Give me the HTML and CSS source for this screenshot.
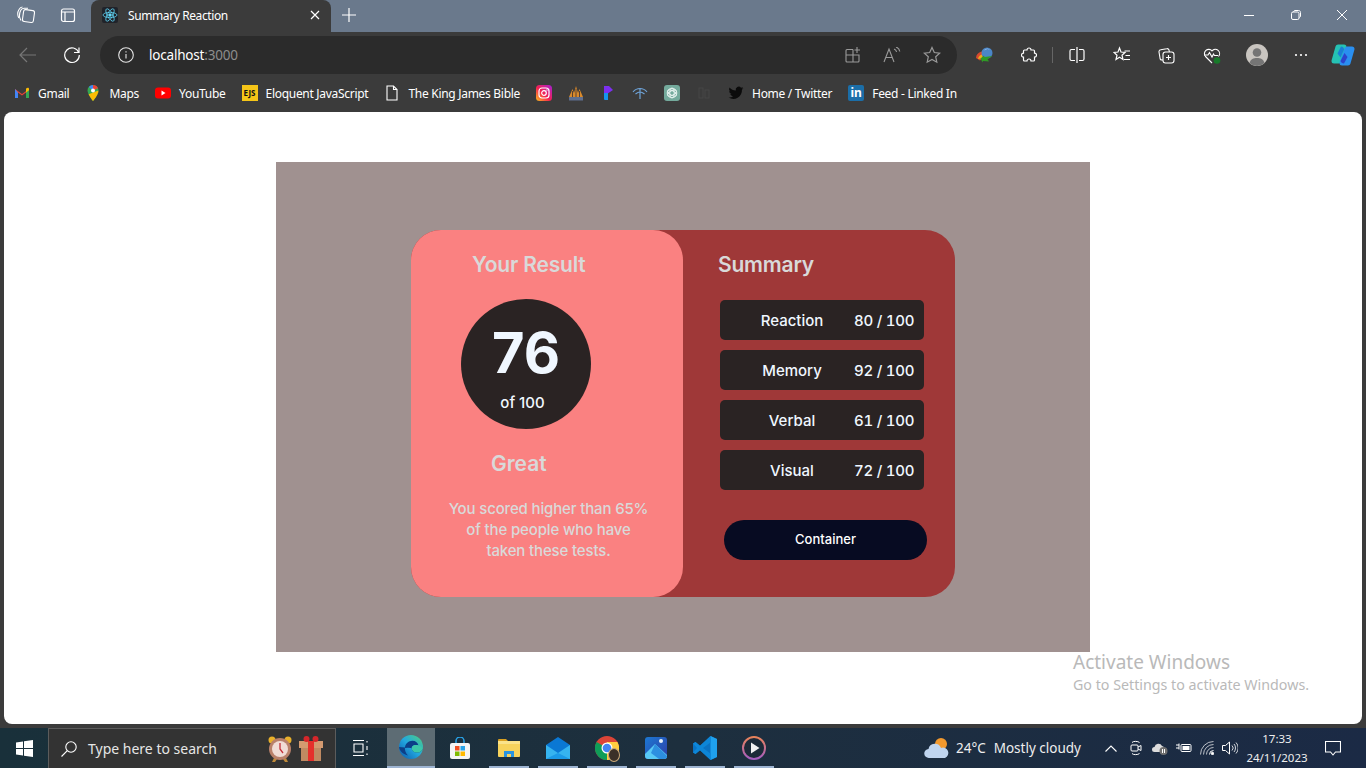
FILE: index.html
```html
<!DOCTYPE html>
<html lang="en">
<head>
    <meta charset="UTF-8">
    <title>Summary Reaction</title>
    <link rel="stylesheet" href="styles.css">
</head>
<body>

<div class="tabstrip">
    <span class="strip-btn"><svg width="20" height="20" viewBox="0 0 20 20" fill="none" stroke="#fff" stroke-width="1.100"><rect x="7" y="5" width="11" height="12" rx="2" transform="rotate(8 12 11)"/><path d="M5 15.500C3.400 13 3 9 4.600 5.500 5.200 4 6.500 3.200 8 3.200h4"/><path d="M2.800 13C1.500 10.500 1.500 7 3 4.500 3.800 3 5 2 6.500 2"/></svg></span>
    <span class="strip-btn"><svg width="16" height="16" viewBox="0 0 16 16" fill="none" stroke="#fff" stroke-width="1.200"><rect x="1.500" y="2" width="13" height="12.500" rx="2"/><path d="M1.500 5h13M5 5v9.500"/></svg></span>
    <div class="tab">
        <span class="tab-icon"><svg width="16" height="16" viewBox="-12 -12 24 24" fill="none" stroke="#61dafb" stroke-width="1.100"><circle r="2" fill="#61dafb"/><ellipse rx="10.500" ry="4"/><ellipse rx="10.500" ry="4" transform="rotate(60)"/><ellipse rx="10.500" ry="4" transform="rotate(120)"/></svg></span>
        <span class="tab-title">Summary Reaction</span>
        <svg class="tab-close" width="10" height="10" viewBox="0 0 10 10" stroke="#fff" stroke-width="1.200"><path d="M1 1l8 8M9 1L1 9"/></svg>
    </div>
    <svg class="tab-new" width="14" height="14" viewBox="0 0 14 14" stroke="#fff" stroke-width="1.200"><path d="M7 0v14M0 7h14"/></svg>
    <div class="win-controls">
        <svg width="10" height="10" viewBox="0 0 10 10" stroke="#fff"><path d="M0 5.500h10"/></svg>
        <svg width="10" height="10" viewBox="0 0 10 10" fill="none" stroke="#fff"><rect x=".5" y="2" width="7.500" height="7.500" rx="1.500"/><path d="M2.500 1.800C2.800 1 3.300.5 4 .5h3.500c1.200 0 2 .8 2 2V6c0 .7-.4 1.200-1.200 1.500"/></svg>
        <svg width="10" height="10" viewBox="0 0 10 10" stroke="#fff"><path d="M0 0l10 10M10 0L0 10"/></svg>
    </div>
</div>

<div class="toolbar">
    <span class="tool-btn"><svg width="18" height="18" viewBox="0 0 18 18" fill="none" stroke="#777" stroke-width="1.200"><path d="M17 9H1M8 2L1 9l7 7"/></svg></span>
    <span class="tool-btn"><svg width="18" height="18" viewBox="0 0 18 18" fill="none" stroke="#fff" stroke-width="1.200"><path d="M15.800 6.500A7.300 7.300 0 1 0 16.300 9"/><path d="M16 1.500v5h-5"/></svg></span>
    <div class="addressbar">
        <svg width="16" height="16" viewBox="0 0 16 16" fill="none" stroke="#e6e6e6" stroke-width="1.100"><circle cx="8" cy="8" r="7.300"/><path d="M8 7v4.500M8 4.300v1.300"/></svg>
        <span class="url">localhost<span class="url-port">:3000</span></span>
        <div class="addr-icons">
            <svg width="16" height="16" viewBox="0 0 16 16" fill="none" stroke="#9a9a9a" stroke-width="1.100"><path d="M8 2.500H2a1 1 0 0 0-1 1V14a1 1 0 0 0 1 1h11a1 1 0 0 0 1-1V8H1M8 2.500V15M12 0v6M9.500 3h5.500"/></svg>
            <svg width="18" height="16" viewBox="0 0 18 16" fill="none" stroke="#9a9a9a" stroke-width="1.100"><path d="M1 15L6 2l5 13M3 10.500h6M11 2c1.500.5 2.300 1.500 2.600 3M13 0c2 .7 3.400 2.200 3.800 4.500"/></svg>
            <svg width="18" height="18" viewBox="0 0 18 18" fill="none" stroke="#9a9a9a" stroke-width="1.200"><path d="M9 1.500l2.300 5 5.400.6-4 3.700 1.100 5.400L9 13.500l-4.800 2.700 1.100-5.400-4-3.700 5.400-.6z"/></svg>
        </div>
    </div>
    <span class="tool-btn first-ext"><svg width="18" height="16" viewBox="0 0 18 16"><path d="M0 11c.5-4 3-6 6-6.500l1 6-3 3z" fill="#d8492e"/><path d="M2 12c.5-2.500 2-4 4-4.500l1 3.500z" fill="#e8b01c"/><circle cx="11" cy="6" r="5.500" fill="#4a86c8"/><path d="M8 3.500a4 4 0 0 1 6-.7 5 5 0 0 0-6 .7z" fill="#dcebf8"/><path d="M4.500 11.500L8 8.500l.5 1.500 8-1-5 3 1.500 2.500-6-.5-.5 1.500z" fill="#2f9a26"/></svg></span>
    <span class="tool-btn"><svg width="16" height="16" viewBox="0 0 16 16" fill="none" stroke="#fff" stroke-width="1.200"><path d="M6 3a2 2 0 0 1 4 0h2.500a1 1 0 0 1 1 1v2.200a2 2 0 0 1 0 4V13a1 1 0 0 1-1 1H10a2 2 0 0 0-4 0H3.500a1 1 0 0 1-1-1v-2.800a2 2 0 0 1 0-4V4a1 1 0 0 1 1-1z"/></svg></span>
    <span class="tool-sep"></span>
    <span class="tool-btn"><svg width="16" height="16" viewBox="0 0 16 16" fill="none" stroke="#fff" stroke-width="1.200"><path d="M6 2.500H2.500a1.500 1.500 0 0 0-1.500 1.500v8a1.500 1.500 0 0 0 1.500 1.500H6M10 2.500h3.500A1.500 1.500 0 0 1 15 4v8a1.500 1.500 0 0 1-1.500 1.500H10M8 0v16"/></svg></span>
    <span class="tool-btn"><svg width="18" height="18" viewBox="0 0 18 18" fill="none" stroke="#fff" stroke-width="1.200"><path d="M6.500 2l1.500 4 4 .4-3 2.800 1 4.300-3.500-2.200L3 13.500l1-4.300-3-2.800 4-.4zM11.500 5H17M12.500 9.500H17M11 13.500h6"/></svg></span>
    <span class="tool-btn"><svg width="18" height="18" viewBox="0 0 18 18" fill="none" stroke="#fff" stroke-width="1.100"><rect x="5" y="6" width="11" height="11" rx="2.500"/><path d="M10.500 9v5M8 11.500h5M5 14H4a2 2 0 0 1-2-2l-1-6a2 2 0 0 1 1.700-2.300l6-1A2 2 0 0 1 11 4l.3 2"/></svg></span>
    <span class="tool-btn"><svg width="18" height="18" viewBox="0 0 18 18" fill="none" stroke="#fff" stroke-width="1.100"><path d="M9 17L2.500 10.500A4.300 4.300 0 0 1 9 4.800a4.300 4.300 0 0 1 6.500 5.700"/><path d="M1 9h4l1.500-2.500L9 11l1.500-3 1 1.500H15"/><circle cx="14" cy="14.500" r="3.300" fill="#187a2a" stroke="none"/></svg></span>
    <span class="tool-btn"><svg width="22" height="22" viewBox="0 0 22 22"><circle cx="11" cy="11" r="11" fill="#c9c5c0"/><circle cx="11" cy="8.500" r="4.300" fill="#757575"/><path d="M3.500 19c1-3.800 4-5 7.500-5s6.500 1.200 7.500 5A11 11 0 0 1 3.500 19z" fill="#757575"/></svg></span>
    <span class="tool-btn tool-more"><svg width="14" height="4" viewBox="0 0 14 4" fill="#fff"><circle cx="2" cy="2" r="1.100"/><circle cx="7" cy="2" r="1.100"/><circle cx="12" cy="2" r="1.100"/></svg></span>
    <span class="tool-btn tool-copilot"><svg width="26" height="22" viewBox="0 0 26 22" stroke-linejoin="round" stroke-width="5"><path d="M8 3h6L9 17H4z" fill="#25c2b4" stroke="#25c2b4"/><path d="M17 5h5l-4 14h-6z" fill="#2a8ff0" stroke="#2a8ff0"/><path d="M11 2.500c2 .2 3 1.500 3 3l-3.500 8-3-4z" fill="#1a7fd6" stroke="none"/><path d="M14 19.500c-2 0-3-1-3.500-2.500l4-8 3 4z" fill="#2c44cc" stroke="none"/></svg></span>
</div>

<div class="bookmarks">
    <span class="bm"><svg width="16" height="16" viewBox="0 0 16 16"><path d="M1 13V4l7 5 7-5v9h-3V7.500L8 10.500 4 7.500V13z" fill="#ea4335"/><path d="M1 4v9h3V7.500z" fill="#4285f4"/><path d="M15 4v9h-3V7.500z" fill="#34a853"/><path d="M12 3.500V7.500l3-2.200V4c0-1-1-1.500-1.800-1z" fill="#fbbc04"/></svg>Gmail</span>
    <span class="bm"><svg width="16" height="16" viewBox="0 0 16 16"><path d="M8 0a5.500 5.500 0 0 0-5.500 5.500C2.500 9.500 8 16 8 16s5.500-6.500 5.500-10.500A5.500 5.500 0 0 0 8 0z" fill="#34a853"/><path d="M8 0a5.500 5.500 0 0 0-4.200 2L8 5.500z" fill="#4285f4"/><path d="M8 0a5.500 5.500 0 0 1 5 3.200L8 5.500z" fill="#ea4335"/><path d="M13.400 5.500L3.600 9.200C5 12 8 16 8 16s5.500-6 5.400-10.500z" fill="#fbbc04"/><circle cx="8" cy="5.500" r="2" fill="#fff"/></svg>Maps</span>
    <span class="bm"><svg width="16" height="16" viewBox="0 0 16 16"><rect y="2.500" width="16" height="11" rx="3" fill="#f00"/><path d="M6.500 5.500v5l4-2.500z" fill="#fff"/></svg>YouTube</span>
    <span class="bm"><span class="ejs">EJS</span>Eloquent JavaScript</span>
    <span class="bm"><svg width="16" height="16" viewBox="0 0 16 16" fill="none" stroke="#fff" stroke-width="1.100"><path d="M3 1h6.500L13 4.500V15H3zM9.500 1v3.500H13"/></svg>The King James Bible</span>
    <span class="bm"><svg width="16" height="16" viewBox="0 0 16 16"><defs><linearGradient id="ig" x1="0" y1="1" x2="1" y2="0"><stop offset="0" stop-color="#fdc01c"/><stop offset=".45" stop-color="#f5214f"/><stop offset="1" stop-color="#a51fd6"/></linearGradient></defs><rect width="16" height="16" rx="3.500" fill="url(#ig)"/><rect x="3" y="3" width="10" height="10" rx="3" fill="none" stroke="#fff" stroke-width="1.200"/><circle cx="8" cy="8" r="2.300" fill="none" stroke="#fff" stroke-width="1.200"/><circle cx="11" cy="5" r=".7" fill="#fff"/></svg></span>
    <span class="bm"><svg width="16" height="16" viewBox="0 0 16 16"><path d="M1 12L4.500 4 6 8l2-7 2 7 1.500-4L15 12z" fill="#d98a2b"/><path d="M4.500 6v6M8 4v8M11.500 6v6" stroke="#5a4030"/><rect x="1" y="12" width="14" height="3.500" fill="#5f6f8f"/></svg></span>
    <span class="bm"><svg width="16" height="16" viewBox="0 0 16 16"><path d="M4 1h5l4 4-6 4H4z" fill="#7c2ff0"/><path d="M4 8h4v7H5a1 1 0 0 1-1-1z" fill="#1495ee"/></svg></span>
    <span class="bm"><svg width="16" height="16" viewBox="0 0 16 16" fill="none" stroke="#6ea3d8" stroke-width="1.200"><path d="M1 7c2-2.500 4.500-3.500 7-3.500S13 4.500 15 7M3.500 9C5 7.800 6.500 7 8 7s3 .8 4.500 2M8 4v10"/></svg></span>
    <span class="bm"><svg width="16" height="16" viewBox="0 0 16 16"><rect width="16" height="16" rx="3" fill="#74aa9c"/><g fill="none" stroke="#e8f3f0" stroke-width=".9"><circle cx="8" cy="8" r="4.800"/><ellipse cx="8" cy="8" rx="4.800" ry="2.200" transform="rotate(30 8 8)"/><ellipse cx="8" cy="8" rx="4.800" ry="2.200" transform="rotate(90 8 8)"/><ellipse cx="8" cy="8" rx="4.800" ry="2.200" transform="rotate(150 8 8)"/></g></svg></span>
    <span class="bm"><svg width="16" height="16" viewBox="0 0 16 16" fill="none" stroke="#464646" stroke-width="1.100"><path d="M3 3v10h4V3zM9 5v8h4V5z"/></svg></span>
    <span class="bm"><svg width="16" height="16" viewBox="0 0 24 24"><path d="M23 4.900c-.8.400-1.700.6-2.600.7.900-.6 1.600-1.400 2-2.500-.9.500-1.900.9-2.900 1.100a4.500 4.500 0 0 0-7.800 4.100C7.900 8.100 4.600 6.300 2.400 3.600a4.500 4.500 0 0 0 1.400 6c-.7 0-1.400-.2-2-.6 0 2.200 1.500 4.100 3.600 4.500-.7.200-1.400.2-2 .1.600 1.800 2.300 3.100 4.200 3.100A9.100 9.100 0 0 1 1 18.600 12.900 12.900 0 0 0 20.900 7.100c.9-.6 1.600-1.400 2.100-2.200z" fill="#0b0b0b"/></svg>Home / Twitter</span>
    <span class="bm"><span class="lnkd">in</span>Feed - Linked In</span>
</div>

<div class="page">
    <div class="panel">
        <div class="card">
            <div class="result">
                <h2 class="result-title">Your Result</h2>
                <div class="score">
                    <span class="score-num">76</span>
                    <span class="score-of">of 100</span>
                </div>
                <h3 class="result-grade">Great</h3>
                <p class="result-text">You scored higher than 65%<br>of the people who have<br>taken these tests.</p>
            </div>
            <div class="summary">
                <h2 class="summary-title">Summary</h2>
                <div class="row"><span class="row-label">Reaction</span><span class="row-value">80 / 100</span></div>
                <div class="row"><span class="row-label">Memory</span><span class="row-value">92 / 100</span></div>
                <div class="row"><span class="row-label">Verbal</span><span class="row-value">61 / 100</span></div>
                <div class="row"><span class="row-label">Visual</span><span class="row-value">72 / 100</span></div>
                <button class="continue">Container</button>
            </div>
        </div>
    </div>
    <div class="watermark">
        <div class="wm-big">Activate Windows</div>
        <div class="wm-small">Go to Settings to activate Windows.</div>
    </div>
</div>

<div class="taskbar">
    <span class="start"><svg width="17" height="17" viewBox="0 0 17 17" fill="#fff"><path d="M0 2.500l7-1v6.500H0zM8 1.300L17 0v8H8zM0 9h7v6.500l-7-1zM8 9h9v8l-9-1.300z"/></svg></span>
    <div class="search">
        <svg width="16" height="16" viewBox="0 0 16 16" fill="none" stroke="#fff" stroke-width="1.100"><circle cx="10" cy="6" r="5.200"/><path d="M6.300 9.700L.5 15.500"/></svg>
        <span class="search-text">Type here to search</span>
        <svg class="search-clock" width="26" height="28" viewBox="0 0 26 28"><circle cx="5" cy="5" r="3.500" fill="#e8b02a"/><circle cx="21" cy="5" r="3.500" fill="#e8b02a"/><path d="M7 23l-2 4h3l2-3zM19 23l2 4h-3l-2-3z" fill="#c08a3a"/><circle cx="13" cy="14" r="11" fill="#b9806a"/><circle cx="13" cy="14" r="8" fill="#f1dcd6"/><path d="M13 8v6l3 4" fill="none" stroke="#c6303a" stroke-width="1.300"/></svg>
        <svg width="24" height="26" viewBox="0 0 24 26"><rect x="2" y="8" width="20" height="17" fill="#c08a62"/><rect y="5" width="24" height="7" fill="#d49a70"/><rect x="9" y="5" width="6" height="20" fill="#e5302c"/><circle cx="7.500" cy="3" r="3" fill="#d6262a"/><circle cx="16.500" cy="3" r="3" fill="#d6262a"/></svg>
    </div>
    <span class="task task-view"><svg width="16" height="16" viewBox="0 0 16 16" fill="none" stroke="#fff" stroke-width="1.100"><path d="M0 .5h11M0 15.500h11M1 4h9v8H1zM14 1v1.500M14 6v4M14 13.500V15"/></svg></span>
    <span class="task task-active"><svg width="24" height="24" viewBox="0 0 24 24"><defs><linearGradient id="edge" x1="0" y1="1" x2="1" y2="0"><stop offset="0" stop-color="#0b56a8"/><stop offset=".5" stop-color="#22a7e0"/><stop offset="1" stop-color="#4fd07c"/></linearGradient></defs><circle cx="12" cy="12" r="12" fill="url(#edge)"/><path d="M23.500 14c-1 3-4 4-6.500 3.500-3.500-.7-5-3.200-4-5.500 1-2 4-2.500 6.500-1.500C18.500 6 14 4.500 10 6.500 5 9 4.500 16 9 20.500c-4.500-1-8.500-4.500-9-8.500" fill="#0c3f88"/><path d="M13 12c-1 2.300.5 4.800 4 5.500 2.500.5 5.500-.5 6.500-3.500 0-1.500-2-3.500-4-3.500-2.500-1-5.500-.5-6.500 1.500z" fill="#3cc8a8"/></svg></span>
    <span class="task"><svg width="22" height="22" viewBox="0 0 22 22"><path d="M7 6V4a4 4 0 0 1 8 0v2" fill="none" stroke="#29a3e8" stroke-width="1.500"/><rect x="1" y="6" width="20" height="16" rx="2" fill="#f4f4f4"/><rect x="6" y="9" width="4.500" height="4.500" fill="#f25022"/><rect x="11.500" y="9" width="4.500" height="4.500" fill="#29a3e8"/><rect x="6" y="14.500" width="4.500" height="4.500" fill="#7fba00"/><rect x="11.500" y="14.500" width="4.500" height="4.500" fill="#ffb900"/></svg></span>
    <span class="task running"><svg width="22" height="20" viewBox="0 0 22 20"><path d="M0 2a1 1 0 0 1 1-1h7l2 2h-10z" fill="#d9a021"/><rect y="3" width="22" height="16" rx="1" fill="#f7d35c"/><rect y="3" width="22" height="3" fill="#fbe38a"/><path d="M6 19v-6h10v6h-3v-3H9v3z" fill="#2a94e0"/></svg></span>
    <span class="task running"><svg width="24" height="22" viewBox="0 0 24 22"><path d="M12 0l12 8v14H0V8z" fill="#0a78d4"/><path d="M0 8l12 8 12-8v14H0z" fill="#36b4f0"/><path d="M12 16L0 22h24z" fill="#1b9ae8"/></svg></span>
    <span class="task running"><span class="chrome-wrap"><svg width="24" height="24" viewBox="0 0 24 24"><circle cx="12" cy="12" r="12" fill="#db4437"/><path d="M12 12L1.600 6A12 12 0 0 0 12 24l6-10.400z" fill="#0f9d58"/><path d="M12 24a12 12 0 0 0 10.400-18H12z" fill="#ffcd40"/><circle cx="12" cy="12" r="5.500" fill="#fff"/><circle cx="12" cy="12" r="4.300" fill="#4285f4"/></svg><span class="chrome-avatar"></span></span></span>
    <span class="task running"><svg width="22" height="22" viewBox="0 0 22 22"><defs><linearGradient id="ph" x1="0" y1="0" x2="1" y2="1"><stop offset="0" stop-color="#1c78d2"/><stop offset="1" stop-color="#2f3fa8"/></linearGradient></defs><rect width="22" height="22" rx="3" fill="url(#ph)"/><circle cx="16" cy="4" r="2" fill="#e8f2fb"/><path d="M0 17l10-10 12 11v1a3 3 0 0 1-3 3H3a3 3 0 0 1-3-3z" fill="#58c9f5"/><path d="M10 7l-4 9 8 6h5a3 3 0 0 0 3-3z" fill="#2d8fe0"/></svg></span>
    <span class="task running"><svg width="24" height="24" viewBox="0 0 24 24"><path d="M17.500 0L24 3v18l-6.500 3L7 14.300 2.500 18 0 16.500v-9L2.500 6 7 9.700z" fill="#0a73c4"/><path d="M17.500 0L24 3v18l-6.500 3z" fill="#1fa1ee"/><path d="M17.500 6.500L10 12l7.500 5.500V24L7 14.300 2.500 18 0 16.500 4 12 0 7.500 2.500 6 7 9.700 17.500 0z" fill="#0d86d8"/></svg></span>
    <span class="task running"><svg width="24" height="24" viewBox="0 0 24 24"><defs><linearGradient id="pl" x1="0" y1="0" x2="0" y2="1"><stop offset="0" stop-color="#e8835a"/><stop offset="1" stop-color="#a45cc0"/></linearGradient></defs><circle cx="12" cy="12" r="11" fill="#1c2a38" stroke="url(#pl)" stroke-width="2"/><path d="M9 6.500v11l8.500-5.500z" fill="#f2f2f2"/></svg></span>

    <div class="tray">
        <svg class="weather" width="26" height="22" viewBox="0 0 26 22"><circle cx="17" cy="7" r="6" fill="#f2992e"/><path d="M5 21a4.500 4.500 0 0 1-.5-9 6.500 6.500 0 0 1 12.500-1 5 5 0 0 1 4 10z" fill="#bfd4ee"/></svg>
        <span class="tray-text">24°C</span>
        <span class="tray-text forecast">Mostly cloudy</span>
        <svg class="tray-chevron" width="12" height="7" viewBox="0 0 12 7" fill="none" stroke="#fff" stroke-width="1.100"><path d="M.5 6.500L6 1l5.500 5.500"/></svg>
        <svg width="12" height="16" viewBox="0 0 12 16" fill="none" stroke="#fff"><path d="M2 2.500C3 1 8 1 9.500 2.500M2 13.500c1 1.500 6 1.500 7.500 0"/><rect x="1" y="5" width="7" height="6" rx="1"/><path d="M8 7l3-1.500v5L8 9"/></svg>
        <svg class="tray-cloud" width="16" height="14" viewBox="0 0 16 14"><path d="M2.500 11a2.500 2.500 0 0 1 0-5 4 4 0 0 1 7.500-1 3 3 0 0 1 2 4.500V11z" fill="#dcdcdc"/><circle cx="11.500" cy="10" r="4" fill="#6f6f6f"/><path d="M10.500 8v4M12.500 8v4" stroke="#fff"/></svg>
        <svg width="16" height="12" viewBox="0 0 16 12" fill="none" stroke="#fff"><path d="M0 3h3M0 6h3M3 1.500v6"/><rect x="5" y="2.500" width="10" height="7" rx="1"/><rect x="6.500" y="4" width="7" height="4" fill="#fff" stroke="none"/></svg>
        <svg width="14" height="14" viewBox="0 0 14 14" fill="none" stroke="#fff"><path d="M.5 13.500A13 13 0 0 1 13.500.5" stroke-opacity=".7"/><path d="M3.500 13.500a10 10 0 0 1 10-10" stroke-opacity=".7"/><path d="M6.500 13.500a7 7 0 0 1 7-7" stroke-opacity=".7"/><path d="M9.500 13.500a4 4 0 0 1 4-4"/><circle cx="12.500" cy="12.500" r="1.200" fill="#fff"/></svg>
        <svg width="16" height="14" viewBox="0 0 16 14" fill="none" stroke="#fff"><path d="M.5 4.500h3L7.500 1v12l-4-3.500h-3z"/><path d="M10 4.500a3.500 3.500 0 0 1 0 5M12 3a6 6 0 0 1 0 8M14 1.500a8 8 0 0 1 0 11" stroke-opacity=".8"/></svg>
        <div class="clock"><div>17:33</div><div>24/11/2023</div></div>
        <svg class="notify" width="16" height="15" viewBox="0 0 16 15" fill="none" stroke="#fff" stroke-width="1.100"><path d="M.5.500h15v10.500h-5L8 14l-2.500-3h-5z"/></svg>
    </div>
</div>

</body>
</html>
```

FILE: styles.css
```css
* {
    box-sizing: border-box;
}
html, body {
    margin: 0;
    width: 1366px;
    height: 768px;
    overflow: hidden;
}
body {
    display: flex;
    flex-direction: column;
    background-color: #3b3b3b;
    font-family: "Noto Sans", sans-serif;
    color: #fff;
}
svg {
    flex: none;
    display: block;
}

/* browser chrome */
.tabstrip {
    height: 32px;
    flex: none;
    display: flex;
    align-items: center;
    background-color: #6a798c;
    padding-left: 5px;
}
.strip-btn {
    width: 42px;
    margin-bottom: 2px;
    display: flex;
    justify-content: center;
}
.tab {
    width: 240px;
    height: 32px;
    margin-left: 2px;
    padding: 0 11px 2px;
    display: flex;
    align-items: center;
    background-color: #3b3b3b;
    border-radius: 8px 8px 0 0;
}
.tab-icon {
    width: 16px;
    height: 16px;
    background-color: #20232a;
    border-radius: 2px;
}
.tab-title {
    margin-left: 10px;
    flex: 1;
    font-size: 12px;
    letter-spacing: -0.4px;
}
.tab-new {
    margin: 0 0 2px 11px;
}
.win-controls {
    margin: 0 0 2px auto;
    width: 142px;
    display: flex;
    justify-content: space-between;
    padding: 0 19px 0 20px;
}

.toolbar {
    height: 46px;
    flex: none;
    display: flex;
    align-items: center;
    padding-left: 6px;
}
.tool-btn {
    width: 44px;
    height: 38px;
    flex: none;
    display: flex;
    align-items: center;
    justify-content: center;
}
.tool-sep ~ .tool-btn {
    width: 45px;
}
.tool-sep ~ .tool-more {
    margin-left: -1px;
}
.tool-sep ~ .tool-copilot {
    width: 42px;
    margin-left: -1px;
}
.addressbar {
    width: 857px;
    height: 38px;
    flex: none;
    margin-left: 6px;
    padding: 0 16px 0 18px;
    display: flex;
    align-items: center;
    background-color: #2b2b2b;
    border-radius: 19px;
}
.url {
    margin-left: 15px;
    font-size: 13.5px;
    letter-spacing: -0.2px;
}
.url-port {
    color: #8d8d8d;
}
.addr-icons {
    margin-left: auto;
    width: 96px;
    display: flex;
    align-items: center;
    justify-content: space-between;
}
.first-ext {
    margin-left: 6px;
}
.tool-sep {
    width: 1px;
    height: 16px;
    flex: none;
    margin: 0 1px;
    background-color: #666;
}

.bookmarks {
    height: 34px;
    flex: none;
    display: flex;
    align-items: center;
    gap: 16px;
    padding: 0 14px 4px;
    font-size: 12px;
    letter-spacing: -0.29px;
}
.bm {
    display: flex;
    align-items: center;
    gap: 8px;
}
.ejs {
    width: 16px;
    height: 16px;
    background-color: #f5c518;
    color: #111;
    font-size: 8px;
    font-weight: 700;
    line-height: 16px;
    text-align: center;
    letter-spacing: 0;
}
.lnkd {
    width: 16px;
    height: 16px;
    background-color: #1b6ea8;
    border-radius: 2px;
    font-size: 12px;
    font-weight: 700;
    line-height: 15px;
    text-align: center;
    letter-spacing: 0;
}

/* page */
.page {
    position: relative;
    flex: none;
    height: 612px;
    margin: 0 4px;
    padding-top: 50px;
    background-color: #fff;
    border-radius: 8px;
    font-family: "Inter", sans-serif;
}
.panel {
    width: 814px;
    height: 490px;
    margin: 0 auto;
    padding-top: 68px;
    background-color: #a09190;
}
.card {
    width: 544px;
    height: 367px;
    margin: 0 auto;
    display: flex;
    background-color: #9f3838;
    border-radius: 30px;
}
.result {
    width: 272px;
    background-color: #fa8181;
    border-radius: 30px;
    padding-top: 21px;
    color: #d9d9d9;
}
.result-title, .summary-title {
    margin: 0;
    font-size: 21px;
    font-weight: 600;
    line-height: 28px;
    letter-spacing: -0.2px;
}
.result-title {
    margin-left: 61px;
}
.score {
    width: 130px;
    height: 130px;
    margin: 20px 0 0 50px;
    display: flex;
    flex-direction: column;
    align-items: center;
    background-color: #2a2323;
    border-radius: 50%;
    color: #f0f7ff;
}
.score-num {
    margin-top: 18px;
    font-size: 56px;
    font-weight: 700;
    line-height: 72px;
}
.score-of {
    margin: 4px 7px 0 0;
    font-size: 15px;
    font-weight: 500;
    line-height: 20px;
}
.result-grade {
    margin: 21px 0 0 80px;
    font-size: 21px;
    font-weight: 600;
    line-height: 28px;
}
.result-text {
    margin: 20px 0 0;
    padding-left: 3px;
    font-size: 15px;
    font-weight: 500;
    line-height: 21px;
    letter-spacing: -0.15px;
    text-align: center;
}
.summary {
    flex: 1;
    padding: 21px 0 0 37px;
}
.summary-title {
    margin-left: -2px;
    margin-bottom: 21px;
    color: #d9d9d9;
}
.row {
    width: 204px;
    height: 40px;
    margin-bottom: 10px;
    padding: 0 10px;
    display: flex;
    align-items: center;
    background-color: #2a2323;
    border-radius: 5px;
    font-size: 15px;
    font-weight: 500;
    color: #f0f7ff;
}
.row-label {
    width: 124px;
    flex: none;
    text-align: center;
}
.row-value {
    flex: 1;
    white-space: nowrap;
    text-align: right;
    font-variant-numeric: tabular-nums;
    letter-spacing: -0.25px;
}
.continue {
    width: 203px;
    height: 40px;
    margin: 20px 0 0 4px;
    padding: 0 0 2px;
    border: none;
    border-radius: 20px;
    background-color: #070b22;
    color: #fff;
    font-family: inherit;
    font-size: 13px;
    font-weight: 500;
}
.watermark {
    position: absolute;
    left: 1069px;
    top: 537px;
    font-family: "Noto Sans", sans-serif;
    color: #b9b9b9;
    white-space: nowrap;
}
.wm-big {
    font-size: 19px;
    line-height: 26px;
}
.wm-small {
    font-size: 14.25px;
    line-height: 20px;
}

/* taskbar */
.taskbar {
    height: 40px;
    flex: none;
    margin-top: 4px;
    display: flex;
    align-items: center;
    background: linear-gradient(90deg, #19303a 0%, #1d2f3e 50%, #1b2a45 100%);
}
.start {
    width: 48px;
    display: flex;
    justify-content: center;
}
.search {
    width: 288px;
    height: 40px;
    padding: 0 12px;
    display: flex;
    align-items: center;
    background-color: #333;
    border: 1px solid #5c5c5c;
    border-bottom: none;
}
.search-text {
    margin-left: 11px;
    flex: 1;
    font-size: 14px;
    color: #e6e6e6;
}
.search-clock {
    margin-right: 6px;
}
.task {
    width: 49px;
    height: 40px;
    display: flex;
    align-items: center;
    justify-content: center;
    flex: none;
}
.task-view {
    width: 51px;
    padding-right: 2px;
}
.task-active {
    width: 48px;
    background-color: #5d6c74;
    border-bottom: 2px solid #9db4d2;
}
.running {
    background: linear-gradient(#9db4d2, #9db4d2) center bottom / 40px 2px no-repeat;
}
.chrome-wrap {
    position: relative;
}
.chrome-avatar {
    position: absolute;
    right: -1px;
    bottom: -2px;
    width: 12px;
    height: 14px;
    background-color: #3a3028;
    border-radius: 50%;
    border: 1px solid #c9a878;
}
.tray {
    margin-left: auto;
    height: 40px;
    display: flex;
    align-items: center;
    padding-right: 25px;
    font-size: 13.5px;
}
.tray-text {
    margin-left: 6px;
    color: #eee;
}
.tray .forecast {
    margin-left: 8px;
}
.tray-chevron {
    margin: 0 5px 0 24px;
}
.tray svg + svg {
    margin-left: 8px;
}
.tray .tray-cloud {
    margin-left: 10px;
}
.clock {
    width: 70px;
    margin: 0 13px 0 4px;
    font-size: 11.5px;
    line-height: 19px;
    text-align: center;
    color: #eee;
    white-space: nowrap;
}
```
